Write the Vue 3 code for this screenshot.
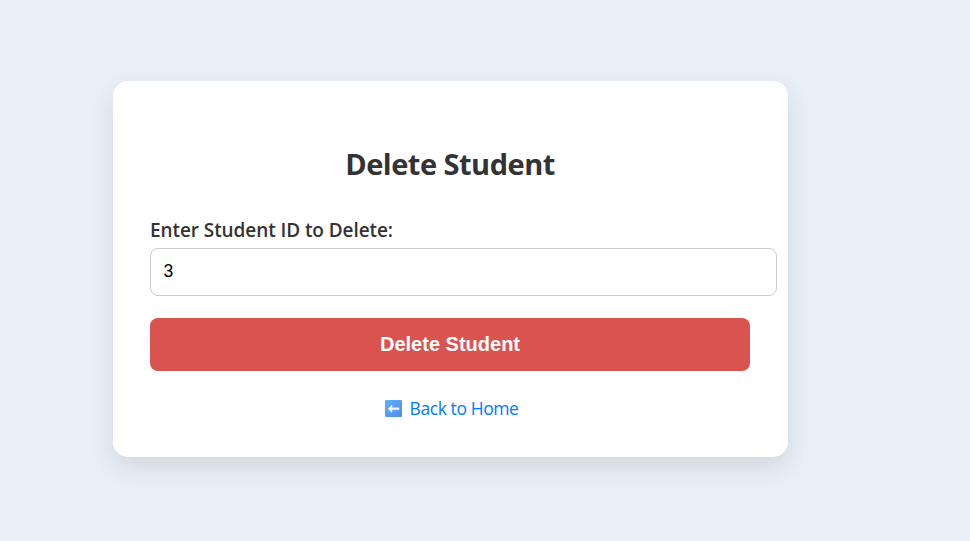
<script setup>
import { ref } from 'vue'

const studentId = ref('3')
</script>

<template>
  <main class="page">
    <form class="card" @submit.prevent>
      <h2 class="title">Delete Student</h2>
      <label class="label" for="student-id">Enter Student ID to Delete:</label>
      <input id="student-id" v-model="studentId" class="field" type="text" />
      <button class="submit" type="submit">Delete Student</button>
      <a class="back" href="#">
        <svg class="arrow" viewBox="0 0 17 17" aria-hidden="true">
          <defs>
            <linearGradient id="tile" x1="0" y1="0" x2="1" y2="1">
              <stop offset="0" stop-color="#65b0f8" />
              <stop offset="1" stop-color="#4b8de8" />
            </linearGradient>
          </defs>
          <rect width="17" height="17" rx="1" fill="url(#tile)" />
          <path d="M3 8.8L7 5.1V7.8H14V9.8H7V12.5Z" fill="#f4f2fb" stroke="#f4f2fb" stroke-width="0.4" stroke-linejoin="round" />
        </svg>
        <span>Back to Home</span>
      </a>
    </form>
  </main>
</template>

<style>
body {
  background: #e8eff6;
}
</style>

<style scoped>
.page {
  box-sizing: border-box;
  height: 541px;
  padding: 81px 182px 84px 113px;
  background: #e8eff6;
  font-family: "Segoe UI", "Open Sans", "Noto Sans", sans-serif;
}

.card {
  box-sizing: border-box;
  display: flex;
  flex-direction: column;
  height: 376px;
  padding: 63px 38px 0 37px;
  border-radius: 15px;
  background: #fff;
  box-shadow: 0 10px 25px rgba(0, 0, 0, 0.1);
}

.title {
  margin: 0;
  color: #333;
  font-size: 29px;
  font-weight: 700;
  line-height: 40px;
  letter-spacing: -0.5px;
  text-align: center;
  white-space: nowrap;
}

.label {
  margin-top: 33px;
  color: #333;
  font-size: 19px;
  font-weight: 600;
  line-height: 26px;
  letter-spacing: -0.08px;
  white-space: nowrap;
}

.field {
  box-sizing: border-box;
  width: 627px;
  height: 48px;
  margin: 5px 0 0;
  padding: 0 12.5px 2px;
  border: 1px solid #ccc;
  border-radius: 8px;
  outline: none;
  background: #fff;
  color: #000;
  font: 17.5px "Liberation Sans", Arial, sans-serif;
}

.submit {
  height: 53px;
  margin: 22px 0 0;
  padding: 0 0 1px;
  border: 0;
  border-radius: 8px;
  background: #d9534f;
  color: #fff;
  font: bold 20px "Liberation Sans", Arial, sans-serif;
}

.back {
  display: flex;
  align-items: center;
  align-self: center;
  gap: 8px;
  height: 24px;
  margin: 25px 0 0 3px;
  color: #007bff;
  font-size: 17.5px;
  font-weight: 400;
  line-height: 24px;
  letter-spacing: -0.42px;
  text-decoration: none;
  white-space: nowrap;
}

.arrow {
  width: 17px;
  height: 17px;
}
</style>
